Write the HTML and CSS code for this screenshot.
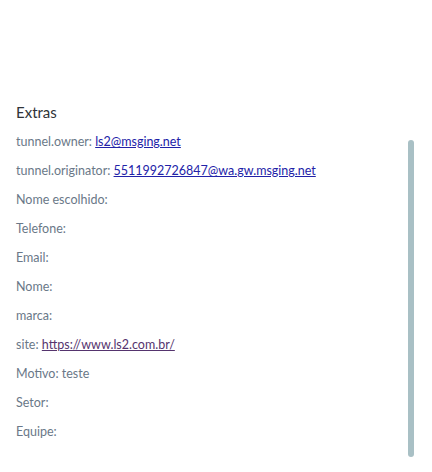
FILE: index.html
```html
<!DOCTYPE html>
<html lang="pt">
<head>
<meta charset="utf-8">
<link rel="stylesheet" href="styles.css">
</head>
<body>
<section class="extras">
  <h2 class="title">Extras</h2>
  <div class="pane">
    <ul class="list">
      <li>tunnel.owner: <a class="link" href="#">ls2@msging.net</a></li>
      <li>tunnel.originator: <a class="link" href="#">5511992726847@wa.gw.msging.net</a></li>
      <li>Nome escolhido:</li>
      <li>Telefone:</li>
      <li>Email:</li>
      <li>Nome:</li>
      <li>marca:</li>
      <li>site: <a class="link visited" href="#">https://www.ls2.com.br/</a></li>
      <li>Motivo: teste</li>
      <li>Setor:</li>
      <li>Equipe:</li>
    </ul>
    <div class="scrollbar"><div class="thumb"></div></div>
  </div>
</section>
</body>
</html>
```

FILE: styles.css
```css
html, body {
  margin: 0;
  padding: 0;
  background: #ffffff;
  font-family: "Lato", "Open Sans", sans-serif;
}
.extras {
  padding: 101px 0 0 16px;
}
.title {
  margin: 0;
  font-size: 15px;
  font-weight: 400;
  line-height: 22px;
  color: #2f3338;
}
.pane {
  display: flex;
  margin-top: 11px;
}
.list {
  flex: 1;
  list-style: none;
  margin: 0;
  padding: 0;
  display: flex;
  flex-direction: column;
  gap: 13px;
}
.list li {
  font-size: 12.5px;
  line-height: 16px;
  color: #6a7888;
}
.link {
  color: #2222a8;
  text-decoration: underline;
}
.link.visited {
  color: #55346e;
}
.scrollbar {
  width: 6px;
  margin: 6px 18px 0 0;
}
.thumb {
  width: 6px;
  height: 317px;
  border-radius: 3px;
  background: #a9c0c5;
}
```
